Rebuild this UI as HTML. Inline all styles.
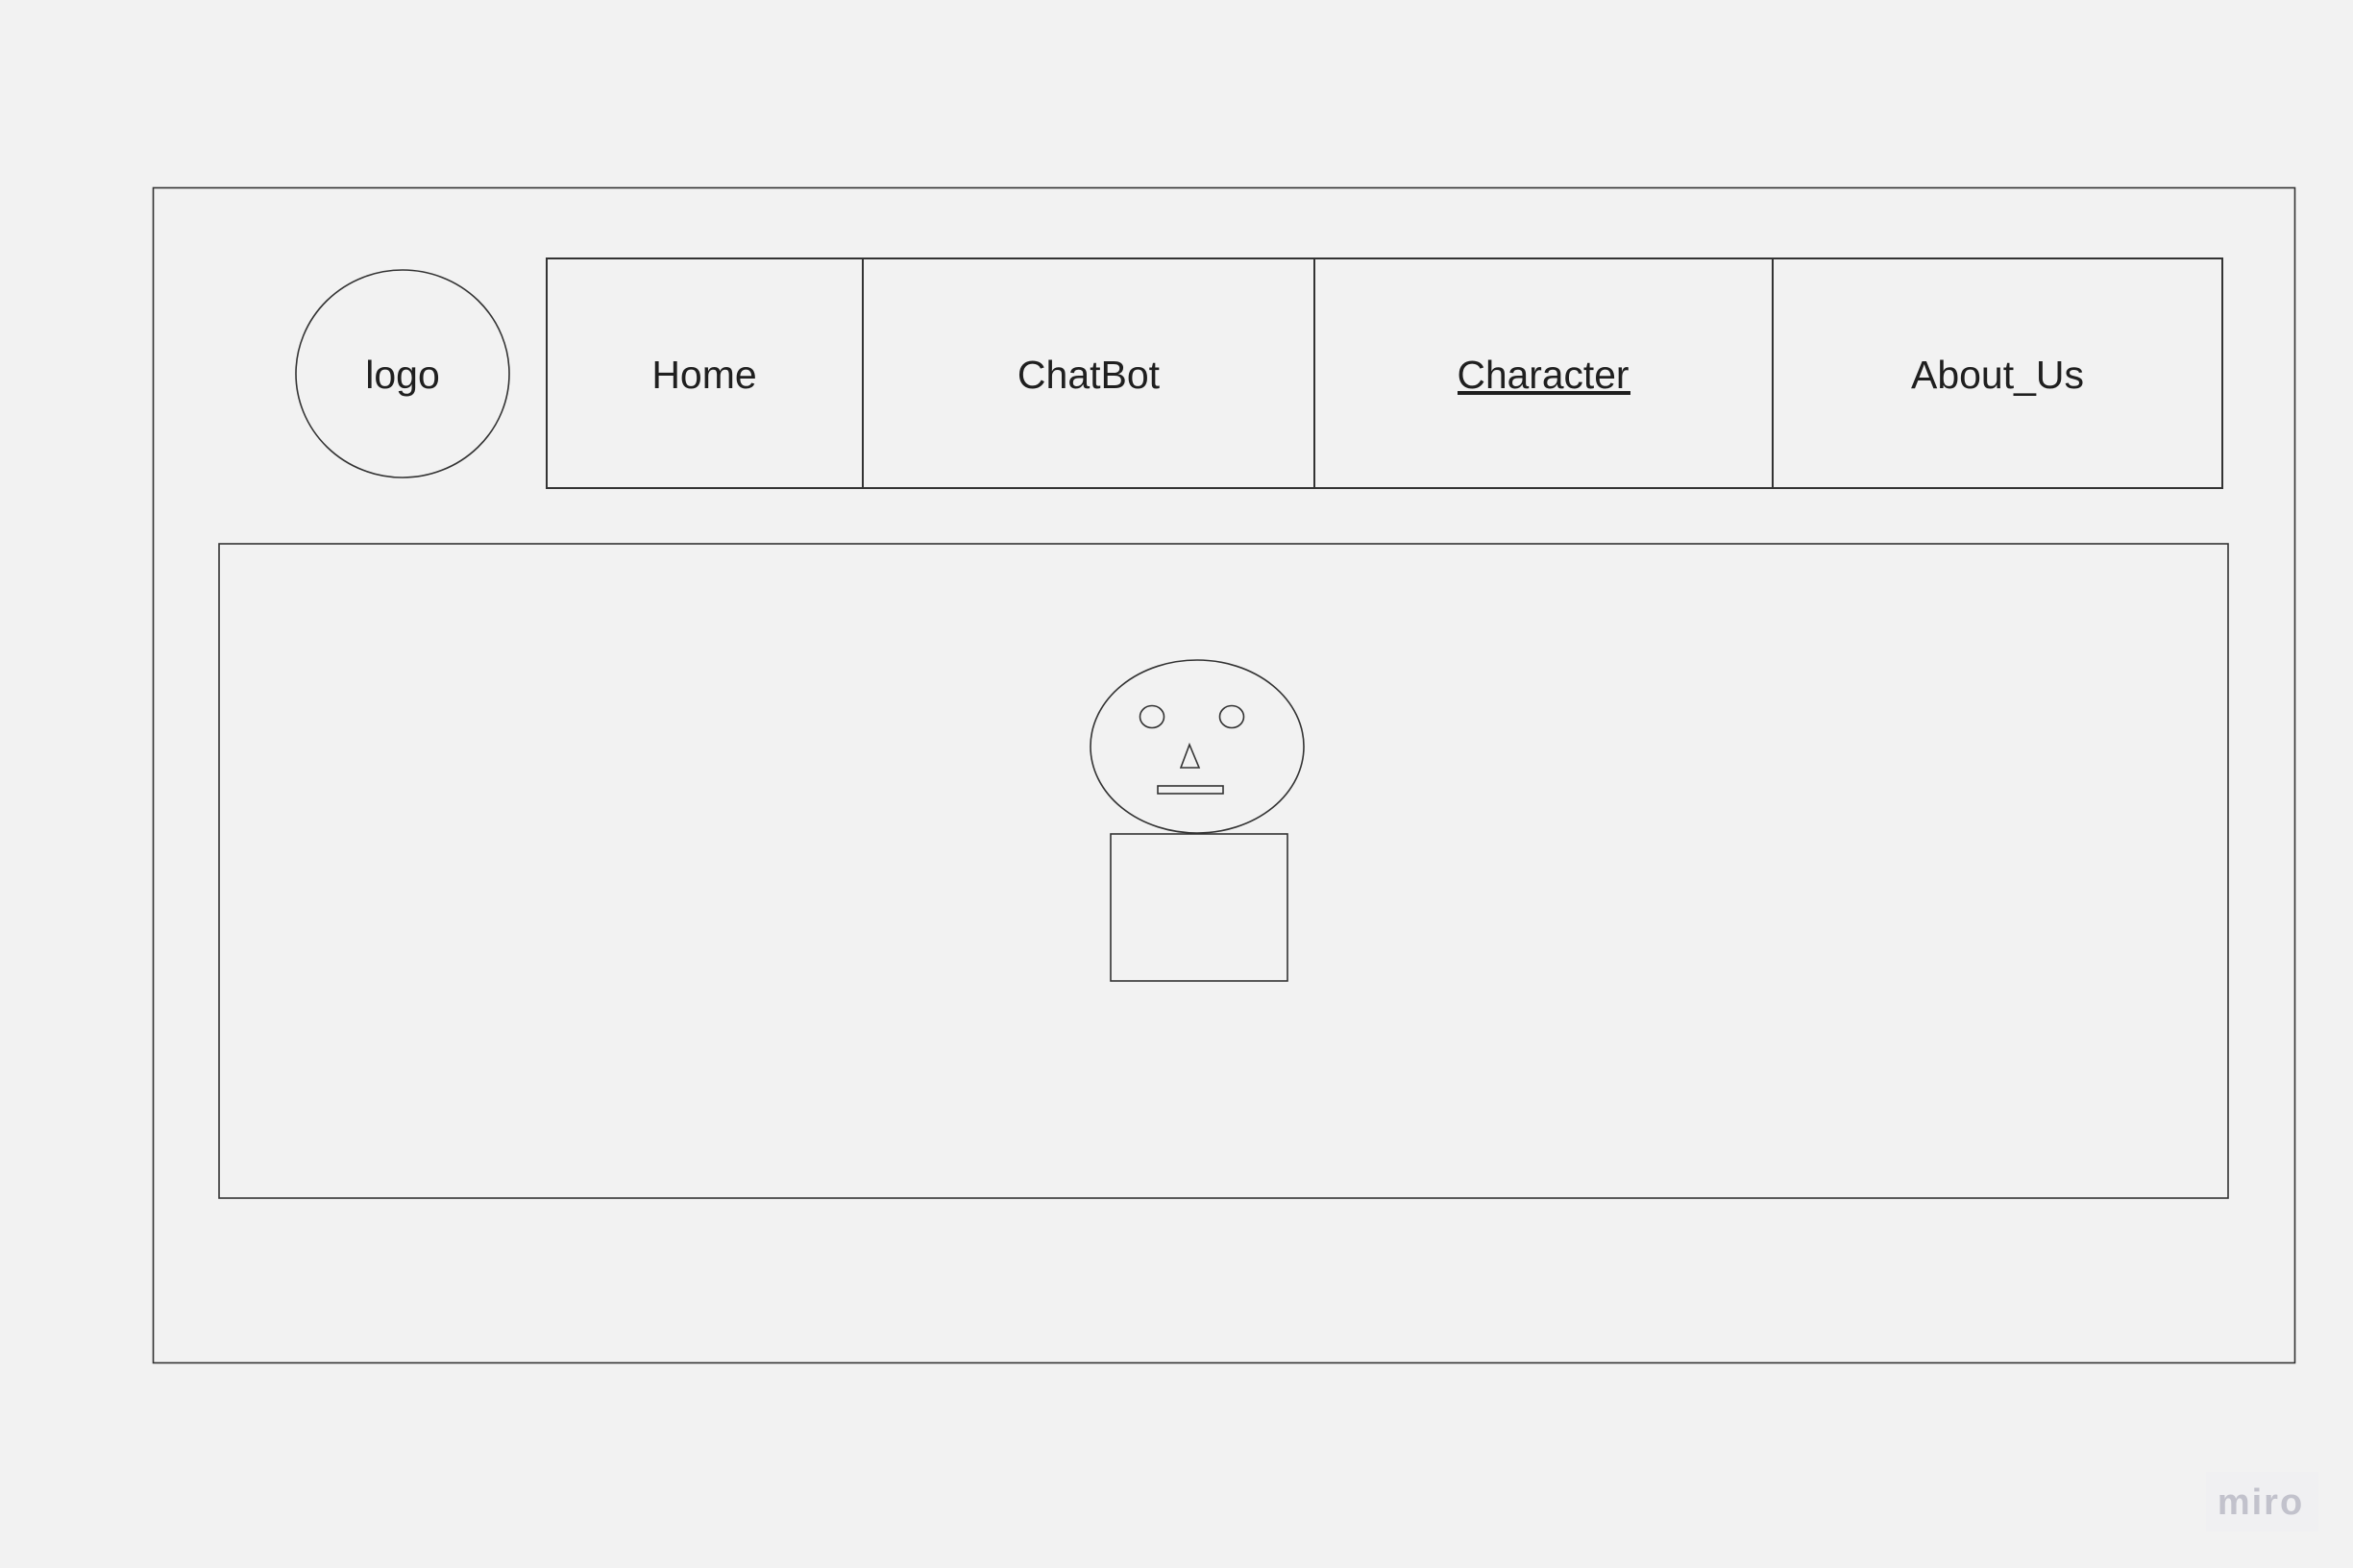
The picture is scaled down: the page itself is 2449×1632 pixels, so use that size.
<!DOCTYPE html>
<html><head><meta charset="utf-8"><style>
html,body{margin:0;padding:0;background:#f2f2f2;}
svg{display:block;}
text{font-family:"Liberation Sans",sans-serif;font-size:41px;fill:#1f1f1f;}
</style></head><body>
<svg width="2449" height="1632" viewBox="0 0 2449 1632" xmlns="http://www.w3.org/2000/svg">
<rect width="2449" height="1632" fill="#f2f2f2"/>
<g fill="none" stroke="#333" stroke-width="1.6">
<rect x="159.5" y="195.5" width="2229" height="1223"/>
<ellipse cx="419" cy="389" rx="111" ry="108"/>
<rect x="569" y="269" width="1744" height="239" stroke-width="2"/>
<line x1="898" y1="269" x2="898" y2="508" stroke-width="2"/>
<line x1="1368" y1="269" x2="1368" y2="508" stroke-width="2"/>
<line x1="1845" y1="269" x2="1845" y2="508" stroke-width="2"/>
<rect x="228" y="566" width="2091" height="681"/>
<ellipse cx="1246" cy="777" rx="111" ry="90"/>
<ellipse cx="1199" cy="746" rx="12.5" ry="11.5"/>
<ellipse cx="1282" cy="746" rx="12.5" ry="11.5"/>
<polygon points="1238,775 1229,799 1248,799"/>
<rect x="1205" y="818" width="68" height="8"/>
<rect x="1156" y="868" width="184" height="153"/>
</g>
<text x="419" y="404" text-anchor="middle">logo</text>
<text x="733" y="404" text-anchor="middle">Home</text>
<text x="1133" y="404" text-anchor="middle">ChatBot</text>
<text x="1606" y="404" text-anchor="middle" textLength="179" lengthAdjust="spacingAndGlyphs">Character</text>
<rect x="1517" y="407" width="180" height="4" fill="#1f1f1f"/>
<text x="2079" y="404" text-anchor="middle">About_Us</text>
<rect x="2296" y="1532" width="117" height="62" fill="#f0f0f2"/>
<text x="2353" y="1576" text-anchor="middle" style="font-size:38px;fill:#c2c2cc;font-weight:bold;letter-spacing:2px">miro</text>
</svg>
</body></html>
